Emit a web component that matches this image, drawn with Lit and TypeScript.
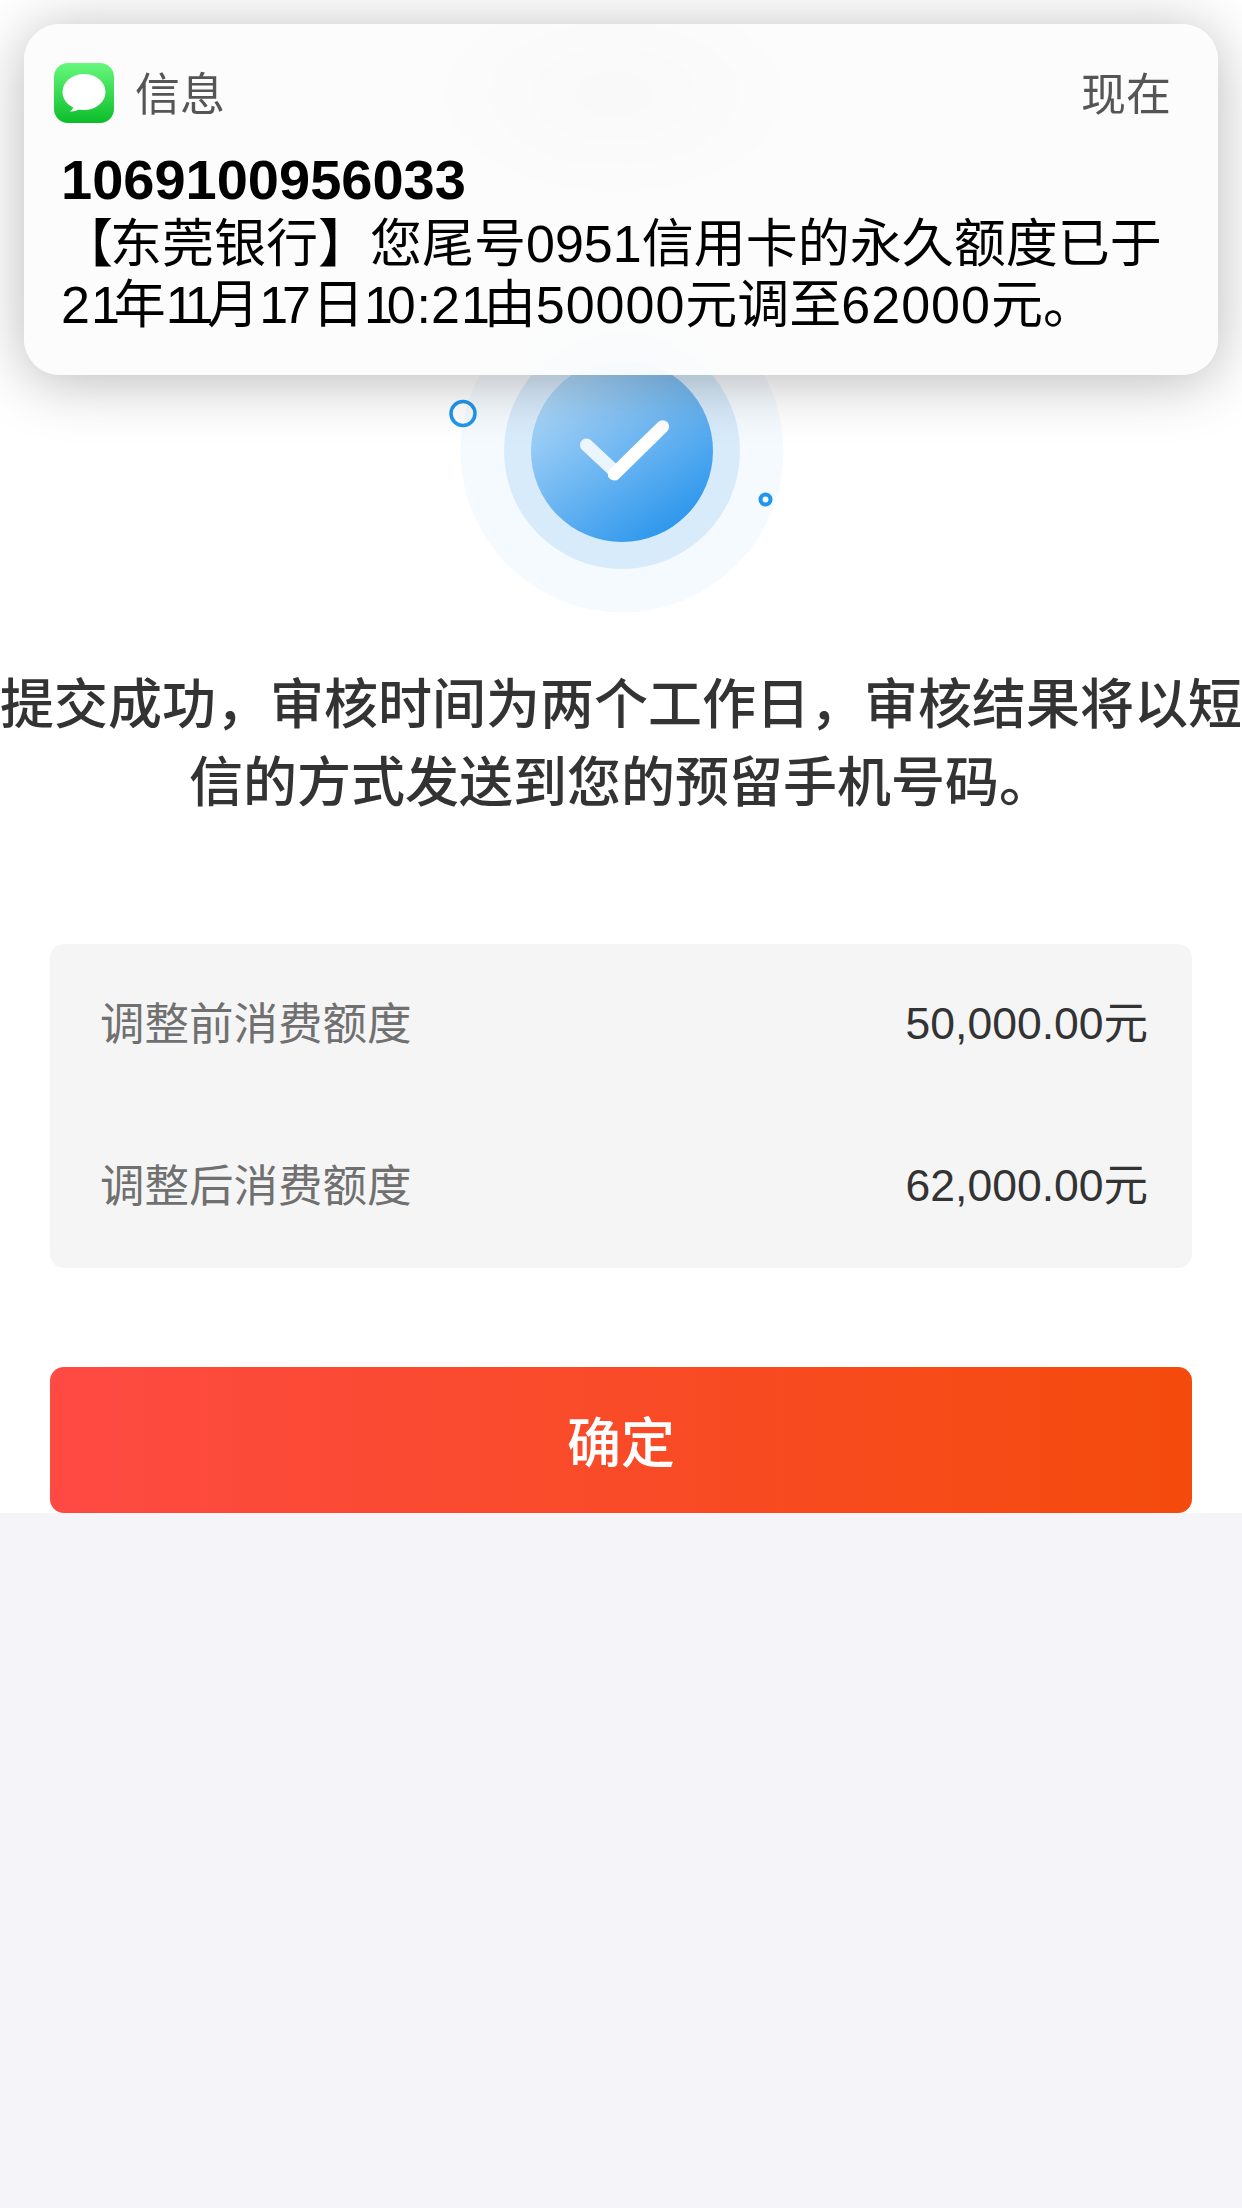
import { LitElement, html, css } from "lit";
import { customElement } from "lit/decorators.js";

const FONT = css`"Liberation Sans", "Noto Sans CJK SC", sans-serif`;

@customElement("app-root")
export class AppRoot extends LitElement {
  static styles = css`
    :host {
      display: block;
      position: relative;
      width: 1242px;
      height: 2208px;
      overflow: hidden;
      background: #f4f4f9;
      font-family: ${FONT};
    }
    .page {
      background: #fff;
      height: 1513px;
      padding-top: 280px;
      box-sizing: border-box;
    }
    .hero {
      display: block;
      width: 400px;
      height: 340px;
      margin: 0 auto;
      transform: translateX(1px);
    }
    h1 {
      margin: 46px 0 0;
      font-size: 54px;
      line-height: 78px;
      font-weight: 500;
      color: #333;
      text-align: center;
      white-space: nowrap;
    }
    .table {
      margin: 122px 50px 0;
      height: 324px;
      box-sizing: border-box;
      background: #f5f5f6;
      border-radius: 14px;
      display: grid;
      grid-template-rows: 152px 172px;
    }
    .row {
      display: flex;
      justify-content: space-between;
      align-items: center;
      padding: 0 44px 0 50px;
      font-size: 44.500px;
    }
    .label { color: #707070; }
    .value { color: #333; position: relative; top: -1px; }
    .btn {
      margin: 99px 50px 0;
      height: 146px;
      padding-bottom: 2px;
      box-sizing: border-box;
      display: flex;
      align-items: center;
      justify-content: center;
      border-radius: 14px;
      background: linear-gradient(90deg, #fe4a43, #f44b0c);
      color: #fff;
      font-size: 54px;
      font-weight: 500;
    }
    .notice {
      position: absolute;
      top: 24px;
      left: 24px;
      width: 1194px;
      height: 351px;
      box-sizing: border-box;
      padding: 39px 47px 0 30px;
      border-radius: 36px;
      background: radial-gradient(ellipse 190px 110px at 590px 70px, rgba(236, 236, 236, 0.22), rgba(236, 236, 236, 0)),
        rgba(252, 252, 252, 0.92);
      backdrop-filter: blur(30px);
      box-shadow: 0 6px 60px rgba(0, 0, 0, 0.28);
    }
    .head {
      display: flex;
      align-items: center;
      gap: 21px;
      height: 60px;
      font-size: 45px;
      color: #555;
    }
    .head span { position: relative; top: -2px; }
    .head .time { margin-left: auto; }
    .app {
      width: 60px;
      height: 60px;
      flex: none;
      display: block;
    }
    .msg {
      margin-top: 26px;
      padding-left: 7px;
      font-size: 52px;
      line-height: 62px;
      color: #000;
      white-space: nowrap;
    }
    .line2 { position: relative; top: 2px; }
    .line3 { position: relative; top: 1px; }
    .from {
      font-weight: 700;
      font-size: 56px;
    }
    .bracket { letter-spacing: -3px; }
    .one { letter-spacing: -6.200px; }
    .dig { letter-spacing: 1px; }
  `;

  render() {
    return html`
      <div class="page">
        <svg class="hero" viewBox="0 0 400 340">
          <defs>
            <linearGradient id="ball" x1="0.2" y1="0.1" x2="0.8" y2="0.95">
              <stop offset="0" stop-color="#aed7f8" />
              <stop offset="1" stop-color="#2a95ec" />
            </linearGradient>
          </defs>
          <circle cx="200" cy="171" r="161.500" fill="#f5faff" />
          <circle cx="200" cy="171" r="118" fill="#d8ebfb" />
          <circle cx="200" cy="171" r="91" fill="url(#ball)" />
          <path d="M164.500 165L192.300 191" fill="none" stroke="#fff" stroke-opacity="0.85" stroke-width="13" stroke-linecap="round" />
          <path d="M192.300 194L240.700 146.700" fill="none" stroke="#fff" stroke-width="13" stroke-linecap="round" />
          <circle cx="41" cy="133.500" r="12" fill="none" stroke="#2196ee" stroke-width="3.500" />
          <circle cx="343.500" cy="219.500" r="5" fill="none" stroke="#2196ee" stroke-width="4" />
        </svg>
        <h1>提交成功，审核时间为两个工作日，审核结果将以短<br />信的方式发送到您的预留手机号码。</h1>
        <div class="table">
          <div class="row"><span class="label">调整前消费额度</span><span class="value">50,000.00元</span></div>
          <div class="row"><span class="label">调整后消费额度</span><span class="value">62,000.00元</span></div>
        </div>
        <div class="btn">确定</div>
      </div>
      <div class="notice">
        <div class="head">
          <svg class="app" viewBox="0 0 60 60">
            <defs>
              <linearGradient id="msg" x1="0" y1="0" x2="0" y2="1">
                <stop offset="0" stop-color="#67f97c" />
                <stop offset="1" stop-color="#0cbd2a" />
              </linearGradient>
            </defs>
            <rect width="60" height="60" rx="14" fill="url(#msg)" />
            <ellipse cx="30" cy="29" rx="21.500" ry="18" fill="#fff" />
            <path d="M20 41C20 44 18.500 47 16 48.500C20 48.800 24 47.500 27 45Z" fill="#fff" />
          </svg>
          <span>信息</span>
          <span class="time">现在</span>
        </div>
        <div class="msg">
          <div class="from">1069100956033</div>
          <div class="line2"><span class="bracket">【</span>东莞银行】您尾号0951信用卡的永久额度已于</div>
          <div class="line3"><span class="dig">2</span><span class="one">1</span>年<span class="one">11</span>月<span class="one">1</span><span class="dig">7</span>日<span class="one">1</span><span class="dig">0</span>:<span class="dig">2</span><span class="one">1</span>由<span class="dig">50000</span>元调至<span class="dig">62000</span>元。</div>
        </div>
      </div>
    `;
  }
}
